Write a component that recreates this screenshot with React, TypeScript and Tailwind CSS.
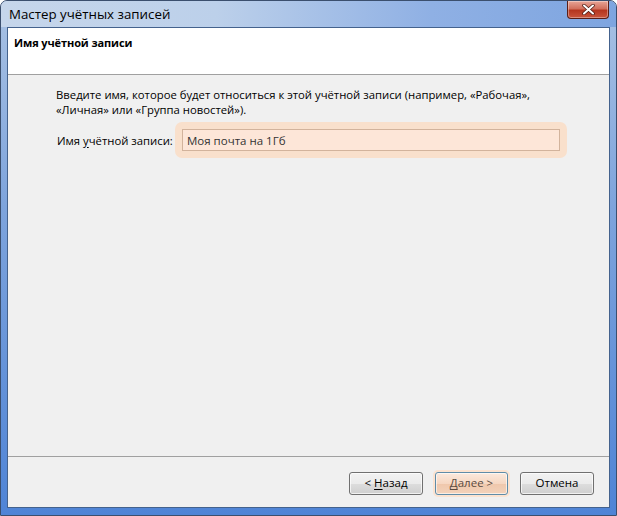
import { useState } from 'react'

const font = { fontFamily: '"Open Sans", "Noto Sans", sans-serif' }

function CloseButton() {
  return (
    <div className="mr-[7px] flex h-[18px] w-[42px] items-center justify-center rounded-b-[4px] border border-t-0 border-[#5a1e16] bg-[linear-gradient(180deg,#e8a597_0%,#d2705d_45%,#b5361f_55%,#c9553c_100%)] shadow-[inset_0_0_0_1px_rgba(255,255,255,0.35)]">
      <svg width="13" height="11" viewBox="0 0 13 11">
        <path d="M2 1.5 L11 9.5 M11 1.5 L2 9.5" stroke="#4a1810" strokeWidth="3.4" strokeLinecap="round" />
        <path d="M2 1.5 L11 9.5 M11 1.5 L2 9.5" stroke="#ffffff" strokeWidth="2" strokeLinecap="round" />
      </svg>
    </div>
  )
}

function WizardButton({ children, focused }: { children: React.ReactNode; focused?: boolean }) {
  if (focused) {
    return (
      <button className="flex h-[23px] w-[73px] items-center justify-center rounded-[3px] border border-[#5f8ca8] bg-[linear-gradient(180deg,#fbe9dd_0%,#f6d7c2_50%,#efc7ab_51%,#f3d2bb_100%)] text-[11.5px] text-[#5a4a40] shadow-[inset_0_0_0_1px_rgba(255,255,255,0.6),0_0_0_2px_#fbe3d1]">
        {children}
      </button>
    )
  }
  return (
    <button className="flex h-[23px] w-[74px] items-center justify-center rounded-[3px] border border-[#707070] bg-[linear-gradient(180deg,#f2f2f2_0%,#ebebeb_50%,#dddddd_51%,#cfcfcf_100%)] text-[11.5px] text-black shadow-[inset_0_0_0_1px_rgba(255,255,255,0.7)]">
      {children}
    </button>
  )
}

export default function App() {
  const [name, setName] = useState('Моя почта на 1Гб')

  return (
    <div className="h-[516px] w-[617px] bg-white" style={font}>
      <div className="flex h-full flex-col rounded-t-[7px] border border-[#3b4f6e] bg-[linear-gradient(180deg,#a9c2e4_0%,#7ea4dc_40%,#4f84d6_100%)]">
        {/* title bar */}
        <div className="flex h-[26px] shrink-0 items-start justify-between rounded-t-[6px] bg-[linear-gradient(90deg,#c6d6eb_0%,#bcd0ea_35%,#8fb0e4_70%,#7ea5e0_100%)]">
          <span className="pl-[8px] pt-[5px] text-[13.3px] leading-[16px] text-black">Мастер учётных записей</span>
          <CloseButton />
        </div>

        {/* client area */}
        <div className="mx-[6px] flex flex-1 flex-col border border-[#44628d] bg-[#f0f0f0]">
          <div className="h-[47px] shrink-0 border-b border-[#a0a0a0] bg-white px-[6px] pt-[7px]">
            <h1 className="text-[11px] font-bold leading-[16px] tracking-[-0.1px] text-black">Имя учётной записи</h1>
          </div>

          <div className="flex-1 pl-[48px] pt-[12px] text-[11.3px] leading-[15px] text-black">
            <p className="whitespace-nowrap">
              Введите имя, которое будет относиться к этой учётной записи (например, «Рабочая»,
              <br />
              «Личная» или «Группа новостей»).
            </p>
            <div className="mt-[5px] flex items-center">
              <label className="w-[119px] whitespace-nowrap pl-[1px]">
                Имя <span className="underline underline-offset-2">у</span>чётной записи:
              </label>
              <div className="rounded-[7px] bg-[#f9e0cc] px-[7px] py-[7px]">
                <input
                  value={name}
                  onChange={(e) => setName(e.target.value)}
                  className="h-[22px] w-[378px] border border-[#d2b39c] bg-[#fde6d8] px-[4px] text-[11.5px] text-[#333] outline-none"
                  style={font}
                />
              </div>
            </div>
          </div>

          <div className="flex h-[51px] shrink-0 items-center justify-end gap-[12px] border-t border-[#a0a0a0] pr-[15px] pt-[2px]">
            <WizardButton>
              &lt; <span className="ml-[3px] underline underline-offset-2">Н</span>азад
            </WizardButton>
            <WizardButton focused>
              <span className="underline underline-offset-2">Д</span>алее &gt;
            </WizardButton>
            <WizardButton>Отмена</WizardButton>
          </div>
        </div>

        <div className="h-[7px] shrink-0" />
      </div>
    </div>
  )
}
